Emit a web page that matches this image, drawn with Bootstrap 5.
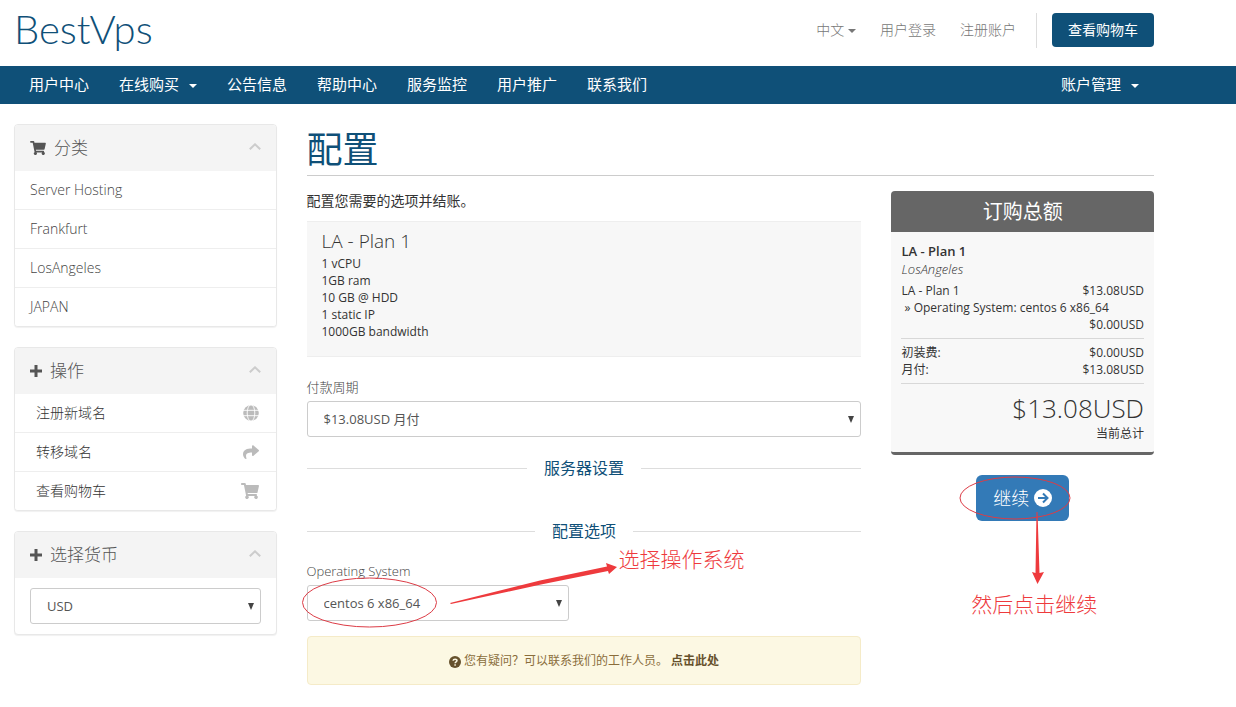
<!DOCTYPE html>
<html lang="zh-CN">
<head>
<meta charset="utf-8">
<meta name="viewport" content="width=device-width, initial-scale=1">
<title>配置 - BestVps</title>
<link href="https://cdn.jsdelivr.net/npm/bootstrap@5.3.0/dist/css/bootstrap.min.css" rel="stylesheet">
<style>
  :root { --brand: #0f5078; --mark-red: #ee3a3d; }
  body { font-family: "Open Sans", "Noto Sans CJK SC", sans-serif; font-size: 14px; line-height: 20px; color: #333; background: #fff; }
  a { text-decoration: none; }
  .page-wrap { max-width: 1168px; padding: 0 14px; margin: 0; }
  .wide-row { --bs-gutter-x: 30px; }
  .site-head { height: 66px; }
  .logo { font-family: Lato, "Open Sans", sans-serif; font-weight: 300; font-size: 40px; line-height: 58px; color: var(--brand); }
  .top-links { padding-bottom: 6px; }
  .top-links a { color: #777; font-weight: 300; }
  .top-rule { width: 1px; height: 35px; background: #ddd; margin: 0 15px 0 20px; }
  .cart-btn { background: var(--brand); color: #fff; font-size: 14px; line-height: 20px; padding: 7px 16px; border: 0; border-radius: 4px; }
  .caret { display: inline-block; border: 4px solid transparent; border-top-color: currentColor; border-bottom: 0; vertical-align: middle; }
  .main-nav { background: var(--brand); }
  .main-nav a { color: #fff; font-size: 15px; line-height: 20px; padding: 8px 15px 10px; }
  .main-nav .caret { margin-left: 10px; }
  .side-panel { border: 1px solid #e8e8e8; border-radius: 4px; margin-bottom: 20px; box-shadow: 0 1px 1px rgba(0,0,0,.06); --bs-card-inner-border-radius: 3px; }
  .side-panel .card-header { background: #f4f4f4; border: 0; padding: 13px 15px; color: #555; }
  .side-panel h2 { font-size: 17px; line-height: 20px; font-weight: 300; margin: 0; }
  .side-panel .card-header svg:last-child { margin-bottom: 4px; }
  .side-panel .list-group { border-top: 0; }
  .side-panel .list-group-item { color: #444; font-weight: 300; padding: 9px 15px; border-color: #eee; border-width: 1px 0 0; }
  .side-panel .list-group-item:first-child { border-top: 0; }
  .side-panel .action-item { padding: 9px 17px 9px 21px; color: #333; }
  .panel-field { padding: 10px 15px; }
  .pick { font-size: 13px; line-height: 20px; color: #555; height: 36px; padding: 7px 24px 7px 16px; border: 1px solid #ccc; border-radius: 3px; background-image: url("data:image/svg+xml,%3Csvg xmlns='http://www.w3.org/2000/svg' viewBox='0 0 6 7'%3E%3Cpath d='M0 0h6L3 7z' fill='%23444'/%3E%3C/svg%3E"); background-size: 6px 7px; background-position: right 6px center; }
  .page-title { font-size: 36px; line-height: 40px; font-weight: 400; color: var(--brand); padding: 6px 0 5px; margin: 0 0 15px; border-bottom: 1px solid #ccc; }
  .intro { margin: 0 0 10px; }
  .plan-box { background: #f7f7f7; border: 1px solid #eee; border-width: 1px 0; padding: 9px 15px 16px; }
  .plan-box h3 { font-size: 19px; line-height: 20px; font-weight: 300; margin: 0 0 4px; }
  .plan-box p { font-size: 12px; line-height: 17px; margin: 0; }
  .field-label { font-size: 13px; line-height: 20px; font-weight: 300; color: #444; margin-bottom: 4px; display: block; }
  .cycle { padding-top: 20px; margin-bottom: 21px; }
  .sub-title { font-size: 16px; line-height: 20px; font-weight: 400; color: var(--brand); margin: 0; gap: 17px; }
  .sub-title::before, .sub-title::after { content: ""; flex: 1; height: 1px; background: #ddd; }
  .sub-title + .sub-title { margin: 43px 0 20px; }
  .os-field { width: 262px; margin-bottom: 15px; }
  .help-box { background: #fcf8e3; border: 1px solid #f5ebc8; border-radius: 4px; color: #8a6d3b; font-size: 12px; line-height: 17px; padding: 15px; }
  .help-box a { color: #66512c; font-weight: 700; }
  .order-box { background: #f8f8f8; border-bottom: 3px solid #666; border-radius: 4px; }
  .order-box h2 { background: #666; color: #fff; font-size: 20px; line-height: 25px; font-weight: 400; padding: 8px; margin: 0; border-radius: 4px 4px 0 0; }
  .order-body { padding: 10px; font-size: 12px; line-height: 17px; }
  .order-name { font-size: 13px; line-height: 18px; }
  .order-body hr { margin: 5px 0; border-color: #777; }
  .order-total { font-size: 26px; font-weight: 300; line-height: 34px; padding-top: 2px; }
  .go-area { margin-top: 20px; }
  .go-btn { background: #337ab7; color: #fff; font-size: 18px; font-weight: 300; line-height: 24px; padding: 11px 17px; border: 0; border-radius: 6px; gap: 5px; width: 93px; }
  .note-art { position: absolute; pointer-events: none; overflow: visible; z-index: 2; }
  .note-text { position: absolute; color: var(--mark-red); font-size: 21px; line-height: 30px; font-weight: 300; white-space: nowrap; z-index: 2; }
  .art-os { left: -5px; top: -22px; }
  .text-os { left: 312px; top: -41px; }
  .art-go { left: -17px; top: 0; }
  .text-go { left: -5px; top: 114px; }
</style>
</head>
<body>
<svg class="d-none" aria-hidden="true">
  <symbol id="cart" viewBox="0 0 576 512"><path fill="currentColor" d="M528 301l47-208c4-15-8-29-23-29H159l-9-45C148 8 138 0 126 0H24C11 0 0 11 0 24v16c0 13 11 24 24 24h70l70 343a56 56 0 1 0 67 9h210a56 56 0 1 0 64-11l5-25c4-15-8-28-23-28H218l-7-32h294c11 0 21-8 23-19z"/></symbol>
  <symbol id="plus" viewBox="0 0 12 12"><path fill="currentColor" d="M4.500 0h3v4.500H12v3H7.500V12h-3V7.500H0v-3h4.500z"/></symbol>
  <symbol id="up" viewBox="0 0 12 7"><path fill="none" stroke="currentColor" stroke-width="2" d="M.8 6.300 6 1.300l5.200 5"/></symbol>
  <symbol id="globe" viewBox="0 0 16 16"><circle cx="8" cy="8" r="7.800" fill="currentColor"/><g fill="none" stroke="#fff" stroke-width=".9"><ellipse cx="8" cy="8" rx="3.800" ry="8.300"/><path d="M0 5.300h16M0 10.700h16"/></g></symbol>
  <symbol id="share" viewBox="0 0 512 512"><path fill="currentColor" d="M504 194 328 42c-15-13-40-2-40 18v80C127 142 0 174 0 326c0 61 39 122 83 154 14 10 33-3 28-19C66 315 133 276 288 274v88c0 21 25 31 40 18l176-152c11-9 11-25 0-34z"/></symbol>
</svg>

<header class="page-wrap site-head d-flex justify-content-between">
  <a class="logo" href="#">BestVps</a>
  <div class="top-links d-flex align-items-center">
    <a href="#" class="me-4">中文 <span class="caret"></span></a>
    <a href="#" class="me-4">用户登录</a>
    <a href="#">注册账户</a>
    <span class="top-rule"></span>
    <button type="button" class="cart-btn">查看购物车</button>
  </div>
</header>

<nav class="main-nav">
  <div class="page-wrap d-flex">
    <a href="#">用户中心</a>
    <a href="#">在线购买<span class="caret"></span></a>
    <a href="#">公告信息</a>
    <a href="#">帮助中心</a>
    <a href="#">服务监控</a>
    <a href="#">用户推广</a>
    <a href="#">联系我们</a>
    <a class="ms-auto" href="#">账户管理<span class="caret"></span></a>
  </div>
</nav>

<div class="page-wrap pt-1">
  <div class="row wide-row pt-3">
    <aside class="col-3">
      <section class="card side-panel">
        <div class="card-header d-flex align-items-center">
          <svg class="me-2" width="16" height="14"><use href="#cart"/></svg>
          <h2>分类</h2>
          <svg class="ms-auto" width="12" height="7" color="#ccc"><use href="#up"/></svg>
        </div>
        <div class="list-group list-group-flush">
          <a class="list-group-item" href="#">Server Hosting</a>
          <a class="list-group-item" href="#">Frankfurt</a>
          <a class="list-group-item" href="#">LosAngeles</a>
          <a class="list-group-item" href="#">JAPAN</a>
        </div>
      </section>

      <section class="card side-panel">
        <div class="card-header d-flex align-items-center">
          <svg class="me-2" width="12" height="12"><use href="#plus"/></svg>
          <h2>操作</h2>
          <svg class="ms-auto" width="12" height="7" color="#ccc"><use href="#up"/></svg>
        </div>
        <div class="list-group list-group-flush">
          <a class="list-group-item action-item d-flex justify-content-between align-items-center" href="#">注册新域名<svg width="16" height="16" color="#bbb"><use href="#globe"/></svg></a>
          <a class="list-group-item action-item d-flex justify-content-between align-items-center" href="#">转移域名<svg width="16" height="16" color="#bbb"><use href="#share"/></svg></a>
          <a class="list-group-item action-item d-flex justify-content-between align-items-center" href="#">查看购物车<svg width="18" height="16" color="#bbb"><use href="#cart"/></svg></a>
        </div>
      </section>

      <section class="card side-panel">
        <div class="card-header d-flex align-items-center">
          <svg class="me-2" width="12" height="12"><use href="#plus"/></svg>
          <h2>选择货币</h2>
          <svg class="ms-auto" width="12" height="7" color="#ccc"><use href="#up"/></svg>
        </div>
        <div class="panel-field">
          <select class="form-select pick" aria-label="选择货币"><option>USD</option></select>
        </div>
      </section>
    </aside>

    <main class="col-9">
      <h1 class="page-title">配置</h1>
      <div class="row wide-row">
        <div class="col-8">
          <p class="intro">配置您需要的选项并结账。</p>
          <div class="plan-box">
            <h3>LA - Plan 1</h3>
            <p>1 vCPU<br>1GB ram<br>10 GB @ HDD<br>1 static IP<br>1000GB bandwidth</p>
          </div>
          <div class="cycle">
            <label class="field-label" for="cycle">付款周期</label>
            <select class="form-select pick" id="cycle"><option>$13.08USD 月付</option></select>
          </div>
          <h2 class="sub-title d-flex align-items-center">服务器设置</h2>
          <h2 class="sub-title d-flex align-items-center">配置选项</h2>
          <label class="field-label" for="os">Operating System</label>
          <div class="position-relative os-field">
            <select class="form-select pick" id="os"><option>centos 6 x86_64</option></select>
            <svg class="note-art art-os" width="316" height="66" aria-hidden="true">
              <ellipse cx="67.500" cy="39.500" rx="67" ry="24.500" fill="none" stroke="#dc3c46"/>
              <path fill="#ee3a3d" d="M148 40 238 17.500 305 3.500 304 0l11 4-8 7-1-3-67 13.500L149 41z"/>
            </svg>
            <span class="note-text text-os">选择操作系统</span>
          </div>
          <div class="help-box text-center">
            <svg width="12" height="12" viewBox="0 0 12 12" aria-hidden="true"><circle cx="6" cy="6" r="6" fill="#66512c"/><path d="M4.100 4.700C4.200 2.600 8 2.700 8 4.600 8 5.900 6.100 5.800 6.100 7.300M6.100 8.300v1.500" fill="none" stroke="#fcf8e3" stroke-width="1.500"/></svg>
            您有疑问？可以联系我们的工作人员。 <a href="#">点击此处</a>
          </div>
        </div>

        <div class="col-4">
          <section class="order-box">
            <h2 class="text-center">订购总额</h2>
            <div class="order-body">
              <div class="order-name fw-semibold">LA - Plan 1</div>
              <div class="order-name fst-italic fw-light mb-1">LosAngeles</div>
              <div class="d-flex justify-content-between"><span>LA - Plan 1</span><span>$13.08USD</span></div>
              <div>&nbsp;» Operating System: centos 6 x86_64</div>
              <div class="text-end">$0.00USD</div>
              <hr>
              <div class="d-flex justify-content-between"><span>初装费:</span><span>$0.00USD</span></div>
              <div class="d-flex justify-content-between"><span>月付:</span><span>$13.08USD</span></div>
              <hr>
              <div class="order-total text-end">$13.08USD</div>
              <div class="text-end">当前总计</div>
            </div>
          </section>
          <div class="d-flex justify-content-center go-area">
            <div class="position-relative">
              <button type="button" class="go-btn d-flex align-items-center justify-content-center text-nowrap">继续
                <svg width="18" height="18" viewBox="0 0 18 18" aria-hidden="true"><circle cx="9" cy="9" r="9" fill="#fff"/><path d="M4 9h9M9 4.500 13.500 9 9 13.500" fill="none" stroke="#337ab7" stroke-width="2"/></svg>
              </button>
              <svg class="note-art art-go" width="112" height="110" aria-hidden="true">
                <ellipse cx="56" cy="23" rx="55" ry="21" fill="none" stroke="#dc3c46"/>
                <path fill="#ee3a3d" d="M77.500 37h1L80.500 98l4.500-1-6.500 12L73 97l3.500 1z"/>
              </svg>
              <span class="note-text text-go">然后点击继续</span>
            </div>
          </div>
        </div>
      </div>
    </main>
  </div>
</div>
<script src="https://cdn.jsdelivr.net/npm/bootstrap@5.3.0/dist/js/bootstrap.bundle.min.js"></script>
</body>
</html>
